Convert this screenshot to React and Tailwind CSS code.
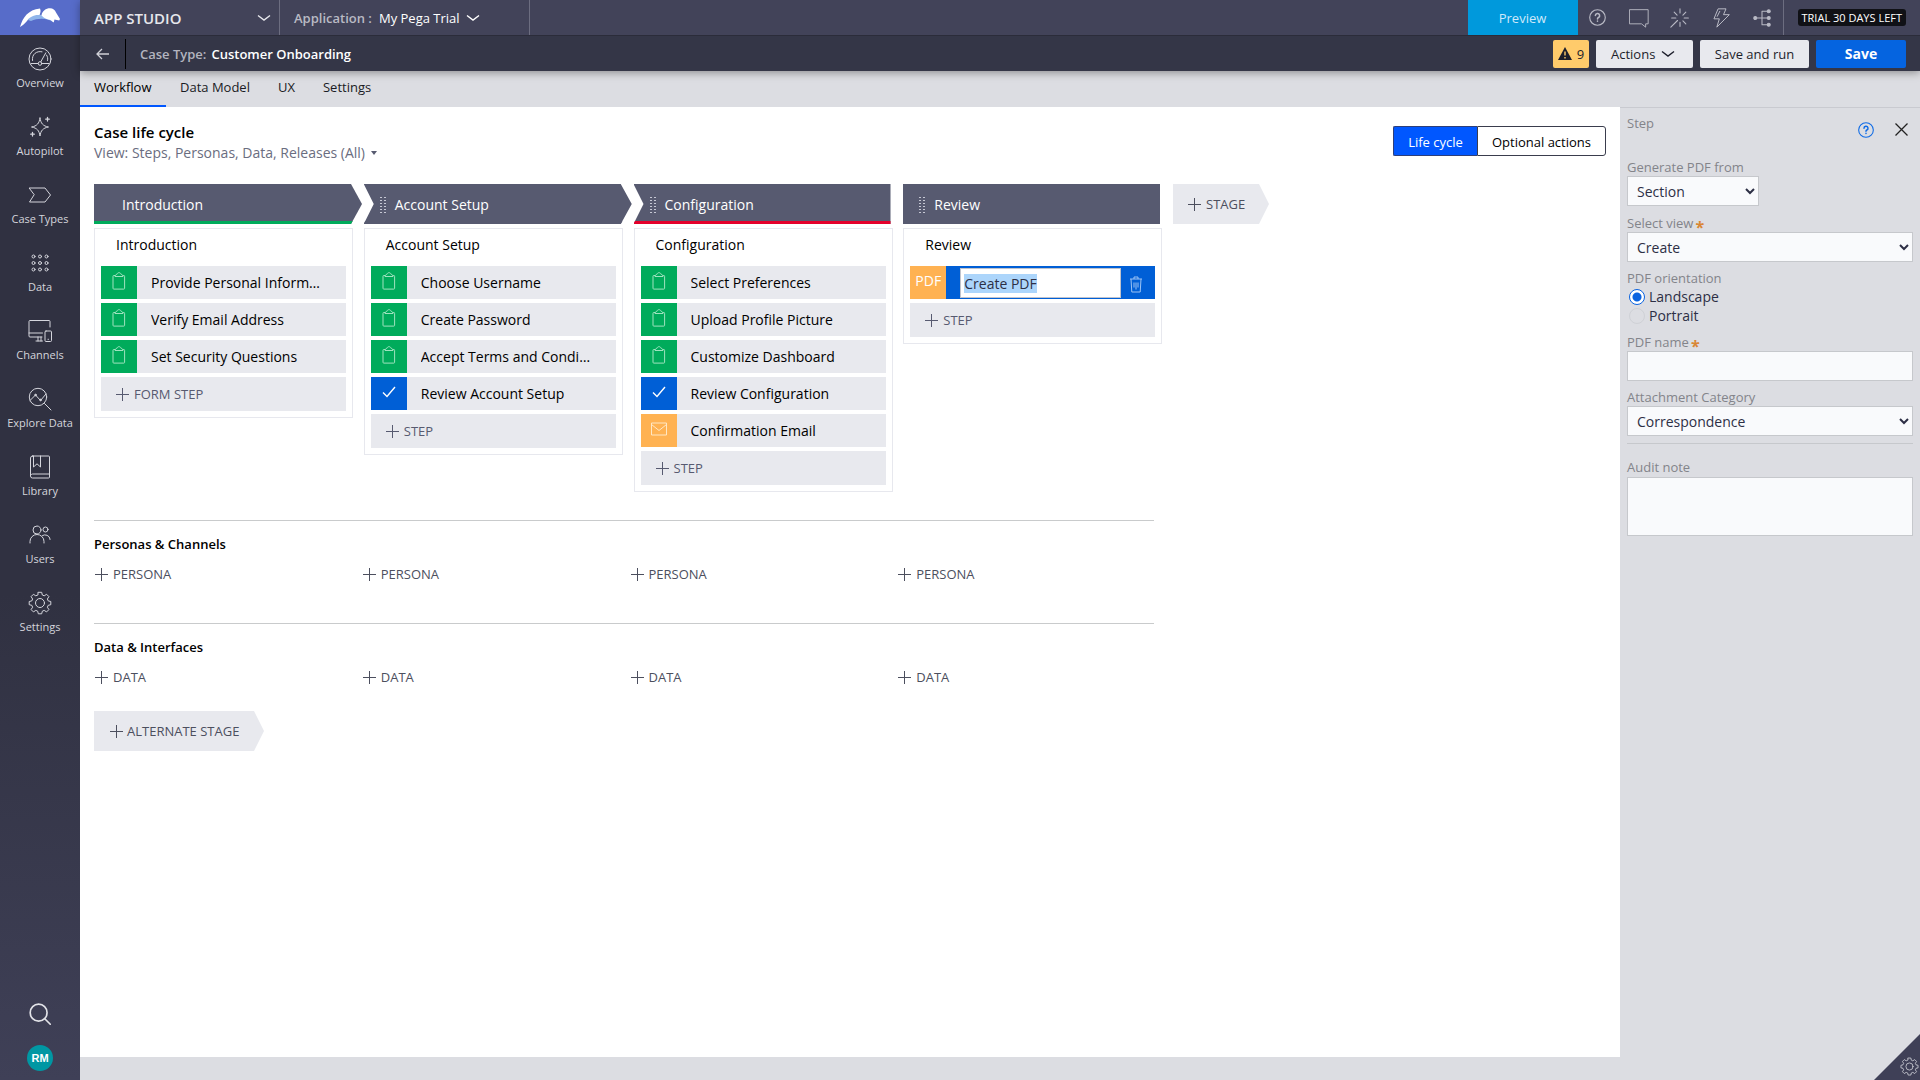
import React, { useEffect, useRef, useState } from "react";

const Svg = ({ size = 24, className = "", children, sw = 1 }) => (
  <svg width={size} height={size} viewBox="0 0 24 24" fill="none" stroke="currentColor" strokeWidth={sw} strokeLinecap="round" strokeLinejoin="round" className={`shrink-0 ${className}`} aria-hidden="true">
    {children}
  </svg>
);

const Chevron = ({ className = "" }) => (
  <svg width="14" height="8" viewBox="0 0 14 8" fill="none" stroke="currentColor" strokeWidth="1.4" className={`shrink-0 ${className}`} aria-hidden="true">
    <path d="M1 1.5 7 6l6-4.5" />
  </svg>
);

const Plus = () => (
  <svg width="13" height="13" viewBox="0 0 13 13" stroke="currentColor" strokeWidth="1" className="shrink-0" aria-hidden="true">
    <path d="M6.500 0v13M0 6.500h13" />
  </svg>
);

const GEAR =
  "M10.300 1.300h3.400l.6 2.700 1.900.8 2.400-1.500 2.300 2.300-1.500 2.400.8 1.900 2.600.6v3.200l-2.600.6-.8 1.900 1.500 2.400-2.300 2.300-2.400-1.500-1.900.8-.6 2.600h-3.400l-.6-2.600-1.900-.8-2.400 1.500-2.300-2.300 1.500-2.400-.8-1.900-2.600-.6v-3.200l2.600-.6.8-1.900-1.500-2.400 2.300-2.300 2.400 1.500 1.900-.8z";

const NAV = [
  {
    label: "Overview",
    icon: (
      <>
        <circle cx="12" cy="12" r="11" />
        <path d="M4.500 13.500c-1-6 4-10 9.500-8.700M18.500 8c1.200 1.700 1.500 3.500 1 5.500M3 16.500h7M14 16.500h7" />
        <circle cx="12" cy="16.500" r="1.800" />
        <path d="m12.800 14.800 5-9" />
      </>
    ),
  },
  {
    label: "Autopilot",
    icon: (
      <>
        <path d="M12 3c.8 5.500 3 8 8.500 9-5.500 1-7.700 3.500-8.500 9-.8-5.500-3-8-8.500-9 5.500-1 7.700-3.500 8.500-9z" />
        <path d="M19.500 2.500v3.500M17.700 4.200h3.600M4.500 17.500v3.500M2.700 19.200h3.600" strokeWidth="1.300" />
      </>
    ),
  },
  { label: "Case Types", icon: <path d="M1.500 5h15.500l5.500 7-5.500 7h-15.500l4.500-7z" /> },
  {
    label: "Data",
    icon: [5.500, 12, 18.500].flatMap((y) => [5.500, 12, 18.500].map((x) => <circle key={`${x}-${y}`} cx={x} cy={y} r="1.500" />)),
  },
  {
    label: "Channels",
    icon: (
      <>
        <path d="M22 8V2.500a1 1 0 0 0-1-1H2a1 1 0 0 0-1 1v14.500a1 1 0 0 0 1 1h12M1 14h13.500M10 18v4M13 18v4M8 22h6.500" />
        <rect x="17" y="12" width="6.500" height="10.500" rx="1" />
        <path d="M20 20.300h.5" />
      </>
    ),
  },
  {
    label: "Explore Data",
    icon: (
      <>
        <circle cx="10" cy="10" r="8.700" />
        <path d="m16.500 16.500 6.500 6.500M2 13.500 7.500 8l5 5.500 5.500-6.500" />
        <circle cx="7.500" cy="8" r=".8" fill="currentColor" />
        <circle cx="12.500" cy="13" r=".8" fill="currentColor" />
      </>
    ),
  },
  {
    label: "Library",
    icon: (
      <>
        <path d="M4.500 1h16a1 1 0 0 1 1 1v20a1 1 0 0 1-1 1h-16a2 2 0 0 1-2-2V3a2 2 0 0 1 2-2zM2.800 20a2 2 0 0 1 1.700-1h17" />
        <path d="M5.500 1v11l3.500-3.200 3.500 3.200V1" />
      </>
    ),
  },
  {
    label: "Users",
    icon: (
      <>
        <circle cx="9" cy="7" r="4" />
        <path d="M2 20v-1.500a7 7 0 0 1 14 0V20" />
        <circle cx="17.500" cy="6.500" r="2.500" />
        <path d="M14.500 12.500a5 5 0 0 1 7.500 3.500v.5" />
      </>
    ),
  },
  {
    label: "Settings",
    icon: (
      <>
        <path d={GEAR} />
        <circle cx="12" cy="12" r="4.500" />
      </>
    ),
  },
];

const HelpIcon = ({ size = 17, className = "" }) => (
  <Svg size={size} sw={1.6} className={className}>
    <circle cx="12" cy="12" r="11" />
    <path d="M9 9.300a3 3 0 1 1 4.300 2.700c-.9.500-1.300 1-1.300 2M12 17v.4" strokeWidth="2.200" />
  </Svg>
);

const Clipboard = () => (
  <svg width="14" height="18" viewBox="0 0 14 18" fill="none" stroke="currentColor" strokeWidth="1" className="mb-1 text-[#9fe3bf]" aria-hidden="true">
    <path d="M3.500 3.500H1.800a.8.8 0 0 0-.8.800v12a.8.8 0 0 0 .8.800h10a.8.8 0 0 0 .8-.8v-12a.8.8 0 0 0-.8-.8H10.500M3 4.500h8c0-1.500-1-2-2-2.200C8.600 1 8 .7 7 .7s-1.600.3-2 1.600c-1 .2-2 .7-2 2.200z" />
  </svg>
);

const CheckIcon = () => (
  <svg width="14" height="12" viewBox="0 0 14 12" fill="none" stroke="currentColor" strokeWidth="1.400" className="mb-1 text-white" aria-hidden="true">
    <path d="m1 6.500 4 4L13 1" />
  </svg>
);

const Mail = () => (
  <svg width="16" height="14" viewBox="0 0 16 14" fill="none" stroke="currentColor" strokeWidth="1" className="mb-1 text-[#ffe7c4]" aria-hidden="true">
    <path d="M.5 1h15v12H.5zM.5 2.500 8 8.500l7.500-6" />
  </svg>
);

const KINDS = {
  form: { bg: "bg-[#00ab5b]", icon: <Clipboard /> },
  approve: { bg: "bg-[#005fd6]", icon: <CheckIcon /> },
  email: { bg: "bg-[#ffb252]", icon: <Mail /> },
};

const STAGES = [
  {
    name: "Introduction",
    add: "FORM STEP",
    steps: [["form", "Provide Personal Information"], ["form", "Verify Email Address"], ["form", "Set Security Questions"]],
    shape: "w-[268px] [clip-path:polygon(0_0,257px_0,100%_50%,257px_100%,0_100%)]",
    edge: "border-[#00ab5b]",
    pad: "pl-7",
  },
  {
    name: "Account Setup",
    add: "STEP",
    steps: [["form", "Choose Username"], ["form", "Create Password"], ["form", "Accept Terms and Conditions"], ["approve", "Review Account Setup"]],
    shape: "w-[268px] [clip-path:polygon(0_0,257px_0,100%_50%,257px_100%,0_100%,10px_50%)]",
    edge: "border-[#575a70]",
    grip: true,
    pad: "pl-4",
  },
  {
    name: "Configuration",
    add: "STEP",
    steps: [["form", "Select Preferences"], ["form", "Upload Profile Picture"], ["form", "Customize Dashboard"], ["approve", "Review Configuration"], ["email", "Confirmation Email"]],
    shape: "w-[257px] [clip-path:polygon(0_0,100%_0,100%_100%,0_100%,10px_50%)]",
    edge: "border-[#e4002b]",
    grip: true,
    pad: "pl-4",
  },
  { name: "Review", add: "STEP", steps: [["pdf", "Create PDF"]], shape: "w-[257px]", edge: "border-[#575a70]", grip: true, pad: "pl-4" },
];

const Grip = () => (
  <svg width="7" height="18" viewBox="0 0 7 18" fill="currentColor" className="shrink-0 text-[#c6c8d4]" aria-hidden="true">
    {[1, 4, 7, 10, 13, 16].map((y) => (
      <path key={y} d={`M0 ${y}h2v1h-2zM4 ${y}h2v1h-2z`} />
    ))}
  </svg>
);

function EditingStep({ name }) {
  const ref = useRef(null);
  const [value, setValue] = useState(name);
  useEffect(() => {
    ref.current.focus();
    ref.current.select();
  }, []);
  return (
    <li className="flex h-[33px] items-center bg-[#005fd6]">
      <span className="flex h-full w-9 shrink-0 justify-center bg-[#ffb252] pt-1 text-[14px] leading-[22px] text-white">PDF</span>
      <input
        ref={ref}
        aria-label="Step name"
        value={value}
        onChange={(e) => setValue(e.target.value)}
        className="ml-3.5 h-[30px] min-w-0 flex-1 border border-[#c0c3cc] bg-white px-[3px] pt-0.5 text-[14px] text-[#2d2f45] outline-none selection:bg-[#acd5fb] selection:text-[#2d2f45]"
      />
      <button type="button" aria-label="Delete step" className="flex h-full w-[34px] items-center justify-center pr-1 pt-1 text-[#9cc4f5]">
        <svg width="14" height="17" viewBox="0 0 14 17" fill="none" stroke="currentColor" strokeWidth="1" aria-hidden="true">
          <path d="M1 3h12M5 3V1h4v2M2 3l.8 13h8.400L12 3M5 6.500v5M7 6.500v7M9 6.500v5" />
        </svg>
      </button>
    </li>
  );
}

function Stage({ s }) {
  return (
    <section className="w-[259px]">
      <h2 className={`flex h-10 items-center border-b-[3px] bg-[#575a70] pt-1 text-[14px] font-medium text-white ${s.edge} ${s.pad} ${s.shape}`}>
        {s.grip ? <span className="mr-2 flex"><Grip /></span> : null}
        {s.name}
      </h2>
      <div className="mt-1 border border-[#e7e8ee] px-1.5 pb-1.5">
        <h3 className="h-[37px] pt-1.5 pl-[15px] text-[14px] text-black">{s.name}</h3>
        <ul className="flex flex-col gap-1">
          {s.steps.map(([kind, name]) =>
            kind === "pdf" ? (
              <EditingStep key={name} name={name} />
            ) : (
              <li key={name} className="flex h-[33px] items-center bg-[#e8e9ee]">
                <span className={`flex h-full w-9 shrink-0 items-center justify-center ${KINDS[kind].bg}`}>{KINDS[kind].icon}</span>
                <span className="ml-3.5 w-[174px] truncate text-[14px] text-black">{name}</span>
              </li>
            )
          )}
          <li>
            <button type="button" className="flex h-[34px] w-full items-center gap-[5px] bg-[#e8e9ee] pl-[15px] text-[13px] text-[#575a70]">
              <Plus /> {s.add}
            </button>
          </li>
        </ul>
      </div>
    </section>
  );
}

function AddRow({ title, label }) {
  return (
    <section className="border-t border-[#c9cbcc] pt-[13px]">
      <h2 className="text-[13px] leading-5 font-semibold text-black">{title}</h2>
      <div className="mt-2.5 grid w-[1071px] grid-cols-4">
        {[0, 1, 2, 3].map((i) => (
          <button key={i} type="button" className="flex h-5 items-center gap-[5px] justify-self-start pl-px text-[13px] text-[#4c4f5e]">
            <Plus /> {label}
          </button>
        ))}
      </div>
    </section>
  );
}

function Label({ htmlFor, children, required }) {
  return (
    <label htmlFor={htmlFor} className="flex h-[18px] items-center text-[13px] text-[#83848a]">
      {children}
      {required ? <span className="ml-0.5 pt-2 text-[16px] leading-3 font-bold text-[#d98634]">*</span> : null}
    </label>
  );
}

const field = "block border border-[#c6c8cc] bg-[#f9fafc] text-[14px] text-[#2d2f45]";

function Select({ id, option, width }) {
  return (
    <div className={`relative ${width}`}>
      <select id={id} className={`${field} h-[30px] w-full appearance-none px-[9px] pt-px`}>
        <option>{option}</option>
      </select>
      <svg width="10" height="7" viewBox="0 0 10 7" fill="none" stroke="#2d2f45" strokeWidth="2" className="pointer-events-none absolute top-3 right-1" aria-hidden="true">
        <path d="m1 1 4 4 4-4" />
      </svg>
    </div>
  );
}

function Radio({ label, checked }) {
  return (
    <label className="flex h-[19px] items-center gap-1 pl-0.5 text-[14px] text-[#2d2f45]">
      <input type="radio" name="orientation" defaultChecked={checked} className="size-4 appearance-none rounded-full border border-[#cfd1d6] checked:border-[#0a63e0] checked:bg-[radial-gradient(circle,#0a63e0_4px,#fff_5px)]" />
      {label}
    </label>
  );
}

function StepPanel() {
  return (
    <aside className="w-[300px] shrink-0 border-t border-[#c9cad0] bg-[#dcdde2] px-[7px]">
      <div className="flex h-[50px] justify-between">
        <h2 className="pt-1.5 text-[13px] leading-[18px] text-[#83848a]">Step</h2>
        <div className="flex items-start gap-[21px] pt-3.5 pr-[5px]">
          <button type="button" aria-label="Help" className="text-[#0d6ae6]"><HelpIcon size={16} /></button>
          <button type="button" aria-label="Close" className="pt-px text-[#222]">
            <svg width="13" height="13" viewBox="0 0 13 13" stroke="currentColor" strokeWidth="1.300" aria-hidden="true"><path d="m.5.5 12 12M12.500.5l-12 12" /></svg>
          </button>
        </div>
      </div>
      <form className="flex flex-col">
        <Label htmlFor="source">Generate PDF from</Label>
        <Select id="source" option="Section" width="w-[132px]" />
        <div className="h-2" />
        <Label htmlFor="view" required>Select view</Label>
        <Select id="view" option="Create" width="w-full" />
        <fieldset className="mt-[7px]">
          <legend className="h-[18px] text-[13px] leading-[18px] text-[#83848a]">PDF orientation</legend>
          <Radio label="Landscape" checked />
          <Radio label="Portrait" />
        </fieldset>
        <div className="h-2" />
        <Label htmlFor="pdfname" required>PDF name</Label>
        <input id="pdfname" className={`${field} h-[30px] w-full px-2`} />
        <div className="h-[7px]" />
        <Label htmlFor="category">Attachment Category</Label>
        <Select id="category" option="Correspondence" width="w-full" />
        <hr className="mt-[7px] mb-3.5 border-[#c6c8cc]" />
        <Label htmlFor="note">Audit note</Label>
        <textarea id="note" className={`${field} mt-px h-[59px] w-full resize-none px-2`} />
      </form>
    </aside>
  );
}

export default function App() {
  return (
    <div className="flex min-h-screen bg-[#dcdde2] font-['Open_Sans',sans-serif] text-[14px] leading-5">
      <aside className="z-10 flex w-20 shrink-0 flex-col items-center bg-gradient-to-b from-[#303141] from-55% to-[#3f4057] text-[#d4d5dc]">
        <a href="#home" aria-label="Home" className="flex h-[35px] w-full items-center justify-center bg-[#576cc9]">
          <svg width="40" height="20" viewBox="0 0 40 20" aria-hidden="true">
            <path d="M8 12c3-6 8-7 13-5l12 3 0 4c-6-4-15-4-22-1z" fill="#8fb5ea" />
            <path d="M0 19C3 9 8 2 20 .5c1.200 2.500.3 4.500-.5 6.500C14 6.500 9.500 9 7 13 4.500 16 2 18 0 19z" fill="#fff" />
            <path d="M21.500 7.500C22 3 26 .3 30 .3c3 0 5 1.700 6 4.200l4 6.500-.8 1.500-4.700-1-.8 3-3.200-2.500c-3-.5-6-1.500-9-4.500z" fill="#fff" />
          </svg>
        </a>
        <nav className="flex w-full flex-col items-center pt-3">
          {NAV.map((n) => (
            <a key={n.label} href={`#${n.label}`} className="flex h-[68px] flex-col items-center text-[11px] leading-4">
              <Svg>{n.icon}</Svg>
              <span className="mt-1">{n.label}</span>
            </a>
          ))}
        </nav>
        <div className="mt-auto flex flex-col items-center gap-5 pb-[9px]">
          <button type="button" aria-label="Search" className="text-[#e2e3e8]">
            <Svg size={22} sw={1.800}><circle cx="10.500" cy="10.500" r="9.200" /><path d="m17.200 17.200 6 6" /></Svg>
          </button>
          <button type="button" aria-label="Account RM" className="size-[26px] rounded-full bg-[#0097a3] font-['Liberation_Sans',sans-serif] text-[11px] font-bold text-white">RM</button>
        </div>
      </aside>

      <div className="flex min-w-0 flex-1 flex-col">
        <header className="relative z-10 shadow-[0_2px_8px_rgba(0,0,0,0.350)]">
          <div className="flex h-[35px] items-stretch bg-[#424359] text-white">
            <button type="button" className="flex w-[200px] items-center justify-between border-r border-[#6c6d80] pr-2 pl-3.5 text-[15px] font-semibold text-[#e6e7ec]">
              <span>APP STUDIO</span>
              <Chevron />
            </button>
            <button type="button" className="flex w-[250px] items-center border-r border-[#6c6d80] pl-3.5 text-[13px]">
              <span className="mr-[7px] font-semibold text-[#b9bac4]">Application :</span>
              <span className="mr-1.5 font-medium">My Pega Trial</span>
              <Chevron />
            </button>
            <div className="ml-auto flex items-stretch">
              <button type="button" className="w-[110px] bg-[#0099dc] text-[13px] font-medium text-[#cfe9fa]">Preview</button>
              <div className="flex items-center gap-px border-r border-[#6c6d80] text-[#b9bac5]">
                <button type="button" aria-label="Help" className="flex w-10 justify-center"><HelpIcon /></button>
                <button type="button" aria-label="Messages" className="flex w-10 justify-center"><Svg size={20} sw={1.100}><path d="M1 2h22v17h-3v4l-5-4H1z" /></Svg></button>
                <button type="button" aria-label="Agile workbench" className="flex w-10 justify-center"><Svg size={20} sw={1.300}><path d="M12 1v5M12 17v5M17 12h5M2 12h5M15.500 8.500 19 5M15.500 15.500 19 19M5 5l3.500 3.500M1 23l8-8" /></Svg></button>
                <button type="button" aria-label="Issues" className="flex w-10 justify-center"><Svg size={20} sw={1.200}><path d="M9 1h9l-3 7h7L7 23l3-10H4zM7.500 10l3-6" /></Svg></button>
                <button type="button" aria-label="Relationships" className="flex w-[41px] justify-center">
                  <Svg size={18} sw={1.400}><path d="M2 12h18M20 3h-8v18h8" /><g fill="currentColor"><circle cx="3" cy="12" r="2" /><circle cx="21" cy="3" r="2" /><circle cx="21" cy="12" r="2" /><circle cx="21" cy="21" r="2" /></g></Svg>
                </button>
              </div>
              <div className="flex items-center px-3.5">
                <span className="rounded-[3px] bg-[#101116] px-1 text-[11px] leading-[17px] font-medium">TRIAL 30 DAYS LEFT</span>
              </div>
            </div>
          </div>
          <div className="flex h-9 items-center border-t border-[#2b2c3a] bg-[#343647] pr-3.5">
            <button type="button" aria-label="Back" className="flex w-[45px] justify-center text-[#d0d1d8]">
              <svg width="13" height="12" viewBox="0 0 13 12" fill="none" stroke="currentColor" strokeWidth="1.300" aria-hidden="true"><path d="M6 1 1 6l5 5M1 6h12" /></svg>
            </button>
            <div className="h-[30px] w-px bg-black" />
            <h1 className="ml-3.5 flex text-[13px]">
              <span className="mr-[5px] font-semibold text-[#b3b4bf]">Case Type:</span>
              <span className="font-semibold text-white">Customer Onboarding</span>
            </h1>
            <div className="ml-auto flex gap-[7px] text-[13px] text-[#1d1e2b]">
              <button type="button" className="flex h-7 w-9 items-center justify-center gap-[5px] rounded-[2px] bg-[#ffcb6b]">
                <svg width="14" height="13" viewBox="0 0 14 13" aria-hidden="true"><path d="M7 0l7 13H0z" fill="#1d1e2b" /><path d="M7 4.500v4M7 10v1.400" stroke="#ffcb6b" strokeWidth="1.400" /></svg>
                9
              </button>
              <button type="button" className="flex h-7 w-[97px] items-center gap-1.5 rounded-[2px] bg-[#e8e9ee] pl-[15px]">Actions <Chevron /></button>
              <button type="button" className="h-7 w-[109px] rounded-[2px] bg-[#e8e9ee]">Save and run</button>
              <button type="button" className="h-7 w-[90px] rounded-[2px] bg-[#0564e0] text-[14px] font-bold text-white">Save</button>
            </div>
          </div>
        </header>

        <nav className="flex h-9 text-[13px] text-[#1a1b24]">
          <a href="#workflow" className="flex w-[86px] border-b-2 border-[#0057ff] pt-1.5 pl-3.5 text-black">Workflow</a>
          <a href="#data-model" className="pt-1.5 pl-3.5">Data Model</a>
          <a href="#ux" className="pt-1.5 pl-7">UX</a>
          <a href="#settings" className="pt-1.5 pl-7">Settings</a>
        </nav>

        <div className="flex flex-1">
          <main className="mb-[23px] min-w-0 flex-1 bg-white px-3.5 pt-[15px]">
            <div className="flex h-[62px] justify-between">
              <div>
                <h1 className="text-[15px] leading-5 font-semibold text-black">Case life cycle</h1>
                <button type="button" className="flex items-center gap-1.5 text-[14px] leading-[21px] text-[#6a6d80]">
                  View: Steps, Personas, Data, Releases (All)
                  <svg width="6" height="4" viewBox="0 0 6 4" fill="#575a70" aria-hidden="true"><path d="M0 0h6L3 4z" /></svg>
                </button>
              </div>
              <div className="mt-1 flex h-[30px] text-[13px]">
                <button type="button" className="w-[84px] rounded-l-[2px] border border-r-0 border-[#2e3f7a] bg-[#0057ff] pt-0.5 font-medium text-white">Life cycle</button>
                <button type="button" className="w-[129px] rounded-r-[3px] border border-[#3a3d4d] pt-0.5 text-black">Optional actions</button>
              </div>
            </div>
            <div className="flex">
              <div className="grid w-[1079px] shrink-0 grid-cols-4 items-start">
                {STAGES.map((s) => <Stage key={s.name} s={s} />)}
              </div>
              <button type="button" className="flex h-10 w-24 items-center gap-[5px] bg-[#e8e9ee] pl-[15px] text-[13px] text-[#4c4f5e] [clip-path:polygon(0_0,86px_0,100%_50%,86px_100%,0_100%)]">
                <Plus /> STAGE
              </button>
            </div>
            <div className="mt-7 w-[1060px]">
              <AddRow title="Personas &amp; Channels" label="PERSONA" />
              <div className="h-[39px]" />
              <AddRow title="Data &amp; Interfaces" label="DATA" />
            </div>
            <button type="button" className="mt-6 flex h-10 w-[170px] items-center gap-1 bg-[#e8e9ee] pl-4 text-[13px] text-[#4c4f5e] [clip-path:polygon(0_0,160px_0,100%_50%,160px_100%,0_100%)]">
              <Plus /> ALTERNATE STAGE
            </button>
          </main>
          <StepPanel />
        </div>
      </div>

      <button type="button" aria-label="Developer tools" className="fixed right-0 bottom-0 z-20 flex size-[46px] items-end justify-end bg-[#3f4057] pr-px pb-1 text-[#d4d5dc] [clip-path:polygon(100%_0,100%_100%,0_100%)]">
        <Svg size={19}><path d={GEAR} /><circle cx="12" cy="12" r="4.500" /></Svg>
      </button>
    </div>
  );
}
